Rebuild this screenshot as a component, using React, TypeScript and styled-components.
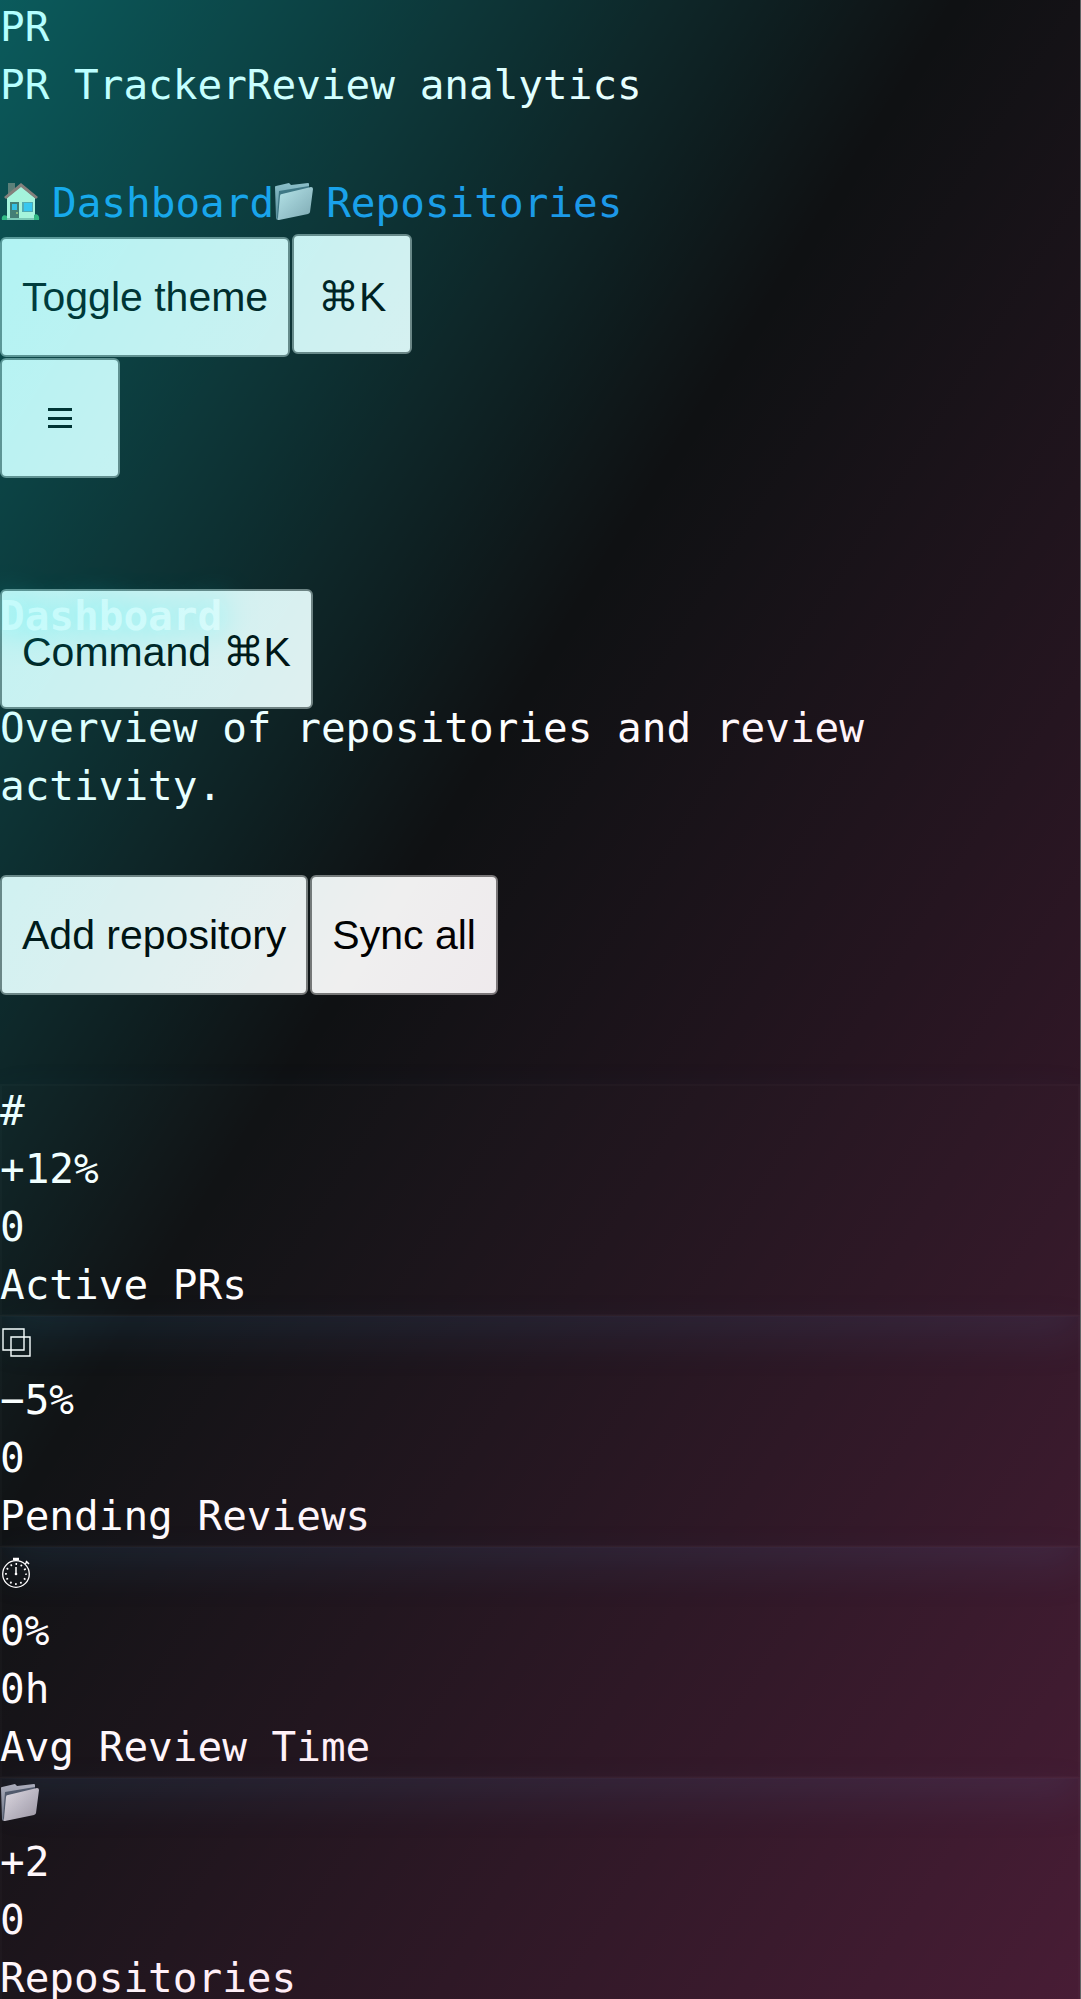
import React from "react";
import styled, { createGlobalStyle } from "styled-components";

const GlobalStyle = createGlobalStyle`
  * { box-sizing: border-box; }
  body {
    margin: 0;
    background: #0f1113;
    color: #ffffff;
    font-family: "DejaVu Sans Mono", monospace;
    font-size: 41px;
    line-height: 58px;
  }
`;

const Page = styled.div`
  position: relative;
  overflow: hidden;
  border-right: 1px solid rgba(255, 255, 255, 0.35);
`;

const Tint = styled.div`
  position: absolute;
  inset: 0;
  z-index: 10;
  pointer-events: none;
  background: linear-gradient(
    122deg,
    rgba(0, 255, 255, 0.31),
    rgba(0, 255, 255, 0) 41%,
    rgba(255, 60, 160, 0) 41%,
    rgba(255, 60, 160, 0.23)
  );
`;

const Brand = styled.div`
  margin-bottom: 58px;
`;

const Nav = styled.nav`
  display: flex;
  height: 60px;
  align-items: flex-start;
`;

const NavLink = styled.a`
  display: flex;
  gap: 12px;
  color: #1e90e6;
  text-decoration: none;
`;

const IconBox = styled.span`
  display: flex;
  width: 40px;
  height: 54px;
  align-items: center;
`;

const ButtonRow = styled.div`
  display: flex;
  align-items: flex-start;
  gap: 2px;
`;

const Button = styled.button<{ $lowered?: boolean; $command?: boolean }>`
  display: flex;
  align-items: center;
  justify-content: center;
  min-width: 120px;
  min-height: 120px;
  margin: ${(p) => (p.$lowered ? "3px 0 0" : "0")};
  padding: ${(p) => (p.$command ? "6px 20px 0" : "0 20px")};
  border: 2px solid #777777;
  border-radius: 6px;
  background: #efefef;
  color: #000000;
  font-family: "Liberation Sans", Arial, sans-serif;
  font-size: 41px;
  line-height: 48px;
  white-space: nowrap;
`;

const MenuRow = styled.div`
  display: flex;
  margin-top: 1px;
`;

const Header = styled.header`
  position: relative;
  margin-top: 111px;
`;

const CommandSlot = styled.div`
  position: absolute;
  top: 0;
  left: 0;
`;

const Title = styled.h1`
  position: relative;
  height: 58px;
  margin: 0 0 52px;
  color: rgba(255, 255, 255, 0.7);
  font-size: 41px;
  font-weight: 700;
  line-height: 54px;
  text-shadow: 0 0 32px rgba(0, 255, 255, 0.5);
`;

const Lead = styled.p`
  margin: 0 0 60px;
`;

const Stats = styled.section`
  display: flex;
  flex-direction: column;
  margin-top: 89px;
`;

const Card = styled.article`
  position: relative;
  margin-bottom: -1px;
  background: rgba(255, 255, 255, 0.01);
  box-shadow: 0 20px 40px rgba(50, 110, 160, 0.16);

  &::before {
    content: "";
    position: absolute;
    inset: 0;
    border: 2px solid rgba(255, 255, 255, 0.02);
    pointer-events: none;
  }
`;

const Line = styled.div`
  height: 58px;
  line-height: 54px;
`;

const IconLine = styled(Line)`
  display: flex;
  align-items: center;
  padding-bottom: 8px;
`;

function HouseIcon() {
  return (
    <svg width="40" height="40" viewBox="0 0 40 40" aria-hidden="true">
      <path d="M8 2h7v9l-7 6z" fill="#7d5148" />
      <path d="M7 17 21 5l14 12v22H7z" fill="#dff0cf" />
      <path d="M4 16 21 2l17 14-2 2L21 6 6 18z" fill="#b5534d" />
      <path d="M10 21h9v18h-9z" fill="#5c5145" />
      <path d="M12 23h5v6h-5z" fill="#45a9dc" />
      <circle cx="17" cy="32" r="1" fill="#d8b854" />
      <path d="M22 21h11v10H22z" fill="#6f8f98" />
      <path d="M24 22h8v8h-8z" fill="#4bb4ea" />
      <path d="M2 39c-1-4 2-6 5-4v4zM34 39v-5c3-2 6 1 5 5z" fill="#43a35a" />
      <path d="M7 37h27v2H7z" fill="#a5b59c" />
    </svg>
  );
}

function FolderIcon({ id }: { id: string }) {
  return (
    <svg width="40" height="40" viewBox="0 0 40 40" aria-hidden="true">
      <defs>
        <linearGradient id={id + "-front"} x1="0" y1="0" x2="1" y2="1">
          <stop offset="0" stopColor="#dedfe4" />
          <stop offset="0.5" stopColor="#b9bbc4" />
          <stop offset="1" stopColor="#9698a2" />
        </linearGradient>
        <linearGradient id={id + "-back"} x1="0" y1="0" x2="0" y2="1">
          <stop offset="0" stopColor="#a9b1bd" />
          <stop offset="1" stopColor="#687584" />
        </linearGradient>
      </defs>
      <path d="M1 6q0-1 1-1l13-3 2 2 17-2q1 0 1 1v10L4 39q-2 0-2-2z" fill={`url(#${id}-back)`} />
      <path d="M5 10 35 5v4L7 14 4 38l-1-2z" fill="#4c5b6b" />
      <path d="M8 13 37 6q2 0 2 2l-3 23q0 1-2 2L5 39q-2 0-1-2l2-22q0-2 2-2z" fill={`url(#${id}-front)`} />
    </svg>
  );
}

function SquaresIcon() {
  return (
    <svg width="40" height="40" viewBox="0 0 40 40" fill="none" stroke="#fff" aria-hidden="true">
      <path d="M3 9h21v21H3zM11 17h19v19H11z" strokeWidth="1.4" />
    </svg>
  );
}

function StopwatchIcon() {
  return (
    <svg width="40" height="40" viewBox="0 0 40 40" fill="none" stroke="#fff" aria-hidden="true">
      <circle cx="16" cy="23" r="13.3" strokeWidth="1.3" />
      <circle cx="16" cy="23" r="10" strokeWidth="2" strokeDasharray="1.6 3.636" strokeDashoffset="0.8" />
      <path d="M16 16v7" strokeWidth="1.5" />
      <circle cx="16" cy="23" r="1.3" fill="#fff" stroke="none" />
      <path d="M13 8h6" strokeWidth="2.5" />
      <path d="m25 13 2-2M26 10l3 3" strokeWidth="1.5" />
    </svg>
  );
}

function MenuIcon() {
  return (
    <svg width="24" height="22" viewBox="0 0 24 22" fill="currentColor" aria-hidden="true">
      <path d="M0 1h24v3H0zM0 10h24v3H0zM0 18h24v3H0z" />
    </svg>
  );
}

const stats = [
  { icon: "#", trend: "+12%", value: "0", label: "Active PRs" },
  { icon: <SquaresIcon />, trend: "−5%", value: "0", label: "Pending Reviews" },
  { icon: <StopwatchIcon />, trend: "0%", value: "0h", label: "Avg Review Time" },
  { icon: <FolderIcon id="stat" />, trend: "+2", value: "0", label: "Repositories" },
];

export default function App() {
  return (
    <Page>
      <GlobalStyle />
      <Brand>
        <Line>PR</Line>
        <Line>
          <span>PR Tracker</span>
          <span>Review analytics</span>
        </Line>
      </Brand>
      <Nav>
        <NavLink href="#dashboard">
          <IconBox>
            <HouseIcon />
          </IconBox>
          Dashboard
        </NavLink>
        <NavLink href="#repositories">
          <IconBox>
            <FolderIcon id="nav" />
          </IconBox>
          Repositories
        </NavLink>
      </Nav>
      <ButtonRow>
        <Button type="button" $lowered>Toggle theme</Button>
        <Button type="button" $command>⌘K</Button>
      </ButtonRow>
      <MenuRow>
        <Button type="button" aria-label="Menu">
          <MenuIcon />
        </Button>
      </MenuRow>
      <Header>
        <CommandSlot>
          <Button type="button" $command>Command ⌘K</Button>
        </CommandSlot>
        <Title>Dashboard</Title>
        <Lead>Overview of repositories and review activity.</Lead>
      </Header>
      <ButtonRow>
        <Button type="button">Add repository</Button>
        <Button type="button">Sync all</Button>
      </ButtonRow>
      <Stats>
        {stats.map((s) => (
          <Card key={s.label}>
            {typeof s.icon === "string" ? <Line>{s.icon}</Line> : <IconLine>{s.icon}</IconLine>}
            <Line>{s.trend}</Line>
            <Line>{s.value}</Line>
            <Line>{s.label}</Line>
          </Card>
        ))}
      </Stats>
      <Tint />
    </Page>
  );
}
